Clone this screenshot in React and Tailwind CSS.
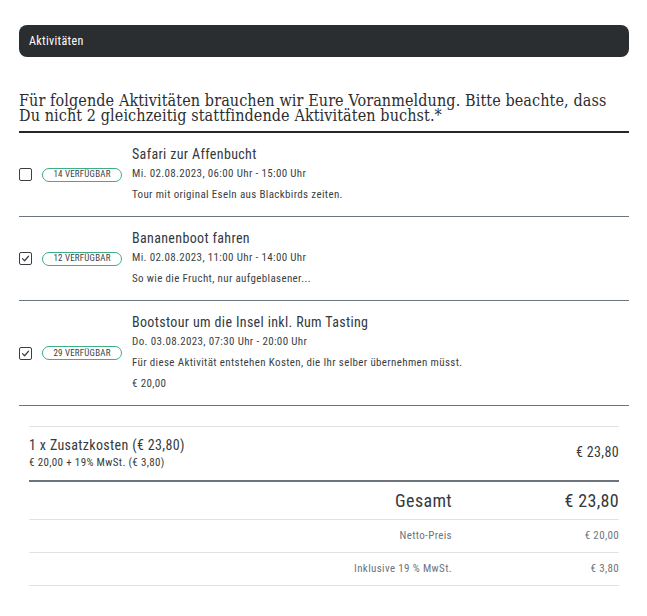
import React from 'react';

const activities = [
  {
    id: 1,
    title: 'Safari zur Affenbucht',
    date: 'Mi. 02.08.2023, 06:00 Uhr - 15:00 Uhr',
    desc: 'Tour mit original Eseln aus Blackbirds zeiten.',
    available: 14,
    checked: false,
  },
  {
    id: 2,
    title: 'Bananenboot fahren',
    date: 'Mi. 02.08.2023, 11:00 Uhr - 14:00 Uhr',
    desc: 'So wie die Frucht, nur aufgeblasener...',
    available: 12,
    checked: true,
  },
  {
    id: 3,
    title: 'Bootstour um die Insel inkl. Rum Tasting',
    date: 'Do. 03.08.2023, 07:30 Uhr - 20:00 Uhr',
    desc: 'Für diese Aktivität entstehen Kosten, die Ihr selber übernehmen müsst.',
    price: '€ 20,00',
    available: 29,
    checked: true,
  },
];

const Checkbox = ({ checked }) => (
  <span className="flex h-[13px] w-[13px] shrink-0 items-center justify-center rounded-[2px] border-[1.5px] border-[#3a3f45] bg-white">
    {checked && (
      <svg viewBox="0 0 12 12" className="h-[9px] w-[9px]">
        <path d="M2 6.2 L4.8 9 L10 3" fill="none" stroke="#3a3f45" strokeWidth="1.6" strokeLinecap="round" strokeLinejoin="round" />
      </svg>
    )}
  </span>
);

const ActivityRow = ({ item }) => (
  <div className="flex items-center border-b border-[#6c757d] pt-[11px] pb-[11px]">
    <div className="flex w-[113px] shrink-0 items-center">
      <Checkbox checked={item.checked} />
      <span className="ml-[10px] flex h-[14px] w-[80px] items-center justify-center rounded-full border border-[#3dae86] text-[9px] uppercase leading-none tracking-[0.2px] text-[#3a3f45]">
        {item.available} verfügbar
      </span>
    </div>
    <div className="flex flex-col">
      <div className="text-[14px] leading-[20px] text-[#343a40]">{item.title}</div>
      <div className="text-[11px] leading-[20px] text-[#3a3f45]">{item.date}</div>
      <div className="text-[11px] leading-[21px] text-[#3a3f45]">{item.desc}</div>
      {item.price && <div className="text-[11px] leading-[21px] text-[#3a3f45]">{item.price}</div>}
    </div>
  </div>
);

export default function App() {
  return (
    <div
      className="min-h-screen bg-white pt-[25px] font-stretch-condensed tracking-[0.35px]"
      style={{ fontFamily: 'Roboto, "Noto Sans", sans-serif' }}
    >
      <div className="ml-[19px] w-[610px]">
        {/* Section header */}
        <div className="flex h-[32px] items-center rounded-[8px] bg-[#2b2e31] px-[10px] text-[12px] text-white">
          Aktivitäten
        </div>

        {/* Question */}
        <div
          className="mt-[36px] border-b-2 border-[#24282b] pb-[8px] text-[16px] leading-[15px] tracking-[0.1px] text-[#2b2e31] whitespace-nowrap"
          style={{ fontFamily: '"DejaVu Serif", "Liberation Serif", serif' }}
        >
          Für folgende Aktivitäten brauchen wir Eure Voranmeldung. Bitte beachte, dass
          <br />
          Du nicht 2 gleichzeitig stattfindende Aktivitäten buchst.*
        </div>

        {activities.map((item) => (
          <ActivityRow key={item.id} item={item} />
        ))}

        {/* Summary */}
        <div className="mx-[10px] mt-[20px] border-t border-[#dee2e6]">
          <div className="grid grid-cols-[1fr_167px] items-center border-b-2 border-[#6c757d] pt-[8px] pb-[10px] text-[#343a40]">
            <div>
              <div className="text-[14px] leading-[20px]">1 x Zusatzkosten (€ 23,80)</div>
              <div className="text-[11px] leading-[15px]">€ 20,00 + 19% MwSt. (€ 3,80)</div>
            </div>
            <div className="text-right text-[14px]">€ 23,80</div>
          </div>
          <div className="grid h-[38px] grid-cols-[1fr_167px] items-center border-b border-[#dee2e6] text-[18px] text-[#343a40]">
            <div className="text-right">Gesamt</div>
            <div className="text-right">€ 23,80</div>
          </div>
          <div className="grid h-[33px] grid-cols-[1fr_167px] items-center border-b border-[#dee2e6] text-[11px] text-[#6c757d]">
            <div className="text-right">Netto-Preis</div>
            <div className="text-right">€ 20,00</div>
          </div>
          <div className="grid h-[33px] grid-cols-[1fr_167px] items-center border-b border-[#dee2e6] text-[11px] text-[#6c757d]">
            <div className="text-right">Inklusive 19 % MwSt.</div>
            <div className="text-right">€ 3,80</div>
          </div>
        </div>
      </div>
    </div>
  );
}
